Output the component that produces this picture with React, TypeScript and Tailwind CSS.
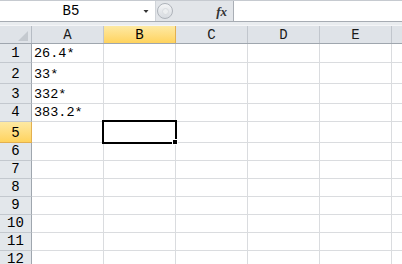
import React from 'react';

const cols = ['A', 'B', 'C', 'D', 'E', 'F'];

const rows: { n: number; h: string; a?: string }[] = [
  { n: 1, h: 'h-[19px]', a: '26.4*' },
  { n: 2, h: 'h-[21px]', a: '33*' },
  { n: 3, h: 'h-[20px]', a: '332*' },
  { n: 4, h: 'h-[18px]', a: '383.2*' },
  { n: 5, h: 'h-[21px]' },
  { n: 6, h: 'h-[18px]' },
  { n: 7, h: 'h-[18px]' },
  { n: 8, h: 'h-[18px]' },
  { n: 9, h: 'h-[18px]' },
  { n: 10, h: 'h-[18px]' },
  { n: 11, h: 'h-[18px]' },
  { n: 12, h: 'h-[18px]' },
];

const FormulaBar: React.FC = () => (
  <div className="h-[22px] flex border-t border-b border-t-[#c6cad0] border-b-[#a7acb3]">
    <div className="w-[155px] flex items-center bg-white">
      <span className="flex-1 text-center text-[14px] leading-none pl-[4px] text-black">B5</span>
      <svg width="16" height="20" viewBox="0 0 16 20" className="mr-[1px]">
        <polygon points="5.5,9 10.5,9 8,12" fill="#333" />
      </svg>
    </div>
    <div className="w-[79px] flex items-center bg-[#e2e5e9] border-l border-[#d0d4d9] border-r border-r-[#a9aeb5]">
      <div className="ml-[1px] w-[16px] h-[16px] rounded-full border border-[#aeb3ba] bg-gradient-to-b from-[#f4f5f7] to-[#d7dbe0] flex items-center justify-center">
        <div className="w-[7px] h-[7px] rounded-full bg-[#eceef0] border border-[#d9dce0]" />
      </div>
      <span className="ml-auto mr-[6px] text-[13px] italic font-bold text-[#333] leading-none" style={{ fontFamily: '"Liberation Serif", serif' }}>
        fx
      </span>
    </div>
    <div className="flex-1 bg-white" />
  </div>
);

const App: React.FC = () => {
  return (
    <div
      className="w-[402px] h-[264px] overflow-hidden bg-white relative"
      style={{ fontFamily: '"Liberation Mono", "Noto Sans CJK SC", monospace' }}
    >
      <FormulaBar />
      <div className="h-[3px] bg-[#e9ecef]" />

      {/* column headers */}
      <div className="flex h-[19px] border-t border-t-[#f4f5f7] border-b border-b-[#9fa6ae]">
        <div className="w-[32px] shrink-0 bg-[#dfe3e8] border-r border-[#b6bcc4] flex items-end justify-end">
          <svg width="12" height="12" viewBox="0 0 12 12" className="mr-[2px] mb-[1px]">
            <polygon points="11,1 11,11 1,11" fill="#c4c9cf" />
          </svg>
        </div>
        {cols.map((c) => (
          <div
            key={c}
            className={
              'w-[72px] shrink-0 flex items-center justify-center text-[14px] leading-none border-r ' +
              (c === 'B'
                ? 'bg-gradient-to-b from-[#fde9a2] to-[#ffd35c] border-[#e3b04f] text-black'
                : 'bg-[#dfe3e8] border-[#c1c6cd] text-[#1a1a1a]')
            }
          >
            {c === 'F' ? null : c}
          </div>
        ))}
      </div>

      {/* rows */}
      {rows.map((r) => (
        <div key={r.n} className={'flex border-b border-[#dadcdf] ' + r.h}>
          <div
            className={
              'w-[32px] shrink-0 flex items-end justify-center pb-[2px] text-[14px] leading-none border-r ' +
              (r.n === 5
                ? 'bg-gradient-to-b from-[#fde9a2] to-[#ffd35c] border-[#e3b04f] -mb-px border-b border-b-[#e3b04f]'
                : 'bg-[#e3e7eb] border-[#9fa6ae] -mb-px border-b border-b-[#c3c8ce]')
            }
          >
            {r.n}
          </div>
          {cols.map((c) => (
            <div
              key={c}
              className="w-[72px] shrink-0 border-r border-[#dadcdf] flex items-end pl-[2px] pb-[2px] text-[13.5px] leading-none text-black"
            >
              {c === 'A' ? r.a : null}
            </div>
          ))}
        </div>
      ))}

      {/* active cell B5 */}
      <div className="absolute left-[102px] top-[120px] w-[75px] h-[24px] border-2 border-black" />
      <div className="absolute left-[172px] top-[139px] w-[6px] h-[6px] bg-black border border-white" />
    </div>
  );
};

export default App;
